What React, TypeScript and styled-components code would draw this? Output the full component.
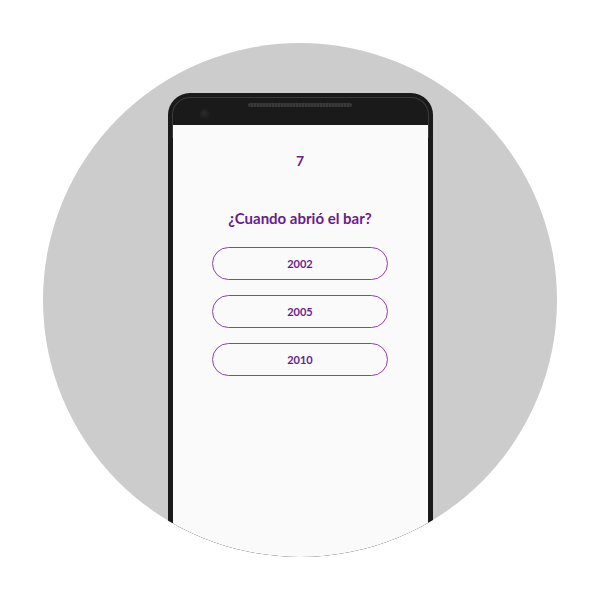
import React from "react";
import styled, { createGlobalStyle } from "styled-components";

const Global = createGlobalStyle`
  html, body { margin: 0; padding: 0; background: #ffffff; }
  body { font-family: Lato, "Open Sans", sans-serif; }
`;

const Page = styled.div`
  width: 600px;
  height: 600px;
  display: flex;
  align-items: center;
  justify-content: center;
`;

const Circle = styled.div`
  width: 514px;
  height: 514px;
  border-radius: 50%;
  background: #cccccc;
  overflow: hidden;
  display: flex;
  flex-direction: column;
  align-items: center;
  padding-top: 50px;
  box-sizing: border-box;
`;

const Phone = styled.div`
  position: relative;
  width: 265px;
  flex-shrink: 0;
  background: #1a1a1a;
  border-radius: 22px 22px 0 0;
  padding: 0 5px;
  box-sizing: border-box;
  &::before {
    content: "";
    position: absolute;
    left: 4px;
    right: 4px;
    top: 4px;
    height: 40px;
    border: 1px solid rgba(255, 255, 255, 0.14);
    border-bottom: none;
    border-radius: 18px 18px 0 0;
    pointer-events: none;
  }
`;

const Bezel = styled.div`
  position: relative;
  height: 32px;
  display: flex;
  justify-content: center;
  padding-top: 10px;
  box-sizing: border-box;
`;

const Speaker = styled.div`
  width: 104px;
  height: 4px;
  border-radius: 2px;
  background: repeating-linear-gradient(90deg, #3a3a3a 0 2px, #2e2e2e 2px 3px);
`;

const Camera = styled.div`
  position: absolute;
  left: 27px;
  top: 16px;
  width: 10px;
  height: 10px;
  border-radius: 50%;
  background: radial-gradient(circle at 40% 40%, #2a2a2a, #1c1c1c 70%);
`;

const Screen = styled.div`
  background: #fafafa;
  height: 500px;
  display: flex;
  flex-direction: column;
  align-items: center;
  padding-top: 28px;
  box-sizing: border-box;
  color: #6a1b8c;
`;

const Counter = styled.div`
  font-size: 14px;
  line-height: 16px;
  font-weight: 700;
`;

const Question = styled.div`
  margin-top: 40px;
  font-size: 15px;
  line-height: 18px;
  font-weight: 700;
`;

const Options = styled.div`
  margin-top: 20px;
  display: flex;
  flex-direction: column;
  gap: 15px;
`;

const Option = styled.button`
  width: 176px;
  height: 33px;
  border: 1px solid #8c3fae;
  border-radius: 17px;
  background: transparent;
  color: #6a1b8c;
  font-family: Lato, "Open Sans", sans-serif;
  font-size: 11px;
  font-weight: 700;
  padding: 0;
  cursor: pointer;
`;

export default function App() {
  const answers = ["2002", "2005", "2010"];
  return (
    <>
      <Global />
      <Page>
        <Circle>
          <Phone>
            <Bezel>
              <Speaker />
              <Camera />
            </Bezel>
            <Screen>
              <Counter>7</Counter>
              <Question>¿Cuando abrió el bar?</Question>
              <Options>
                {answers.map((a) => (
                  <Option key={a}>{a}</Option>
                ))}
              </Options>
            </Screen>
          </Phone>
        </Circle>
      </Page>
    </>
  );
}
